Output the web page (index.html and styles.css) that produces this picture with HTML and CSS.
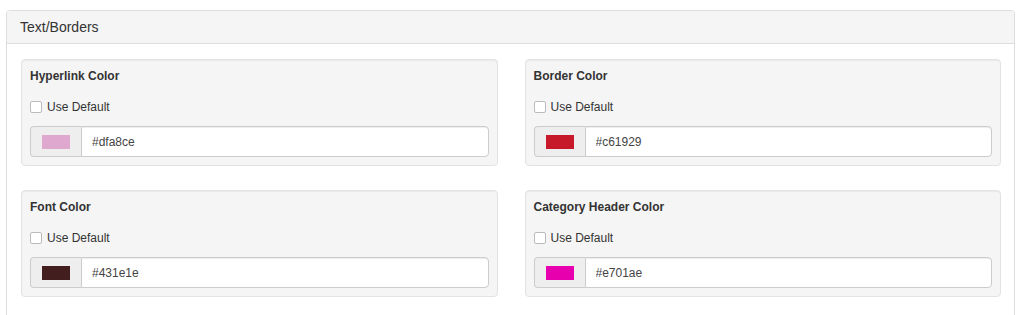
FILE: index.html
```html
<!DOCTYPE html>
<html lang="en">
<head>
  <meta charset="UTF-8">
  <title>Text/Borders</title>
  <link rel="stylesheet" href="styles.css">
</head>
<body>
  <div class="panel">
    <div class="panel-heading">Text/Borders</div>
    <div class="panel-body">
      <div class="color-grid">
        <div class="well">
          <div class="well-title">Hyperlink Color</div>
          <label class="check-row"><input type="checkbox" class="check"> Use Default</label>
          <div class="input-group">
            <span class="addon"><span class="swatch" style="background-color: #dfa8ce;"></span></span>
            <input type="text" class="color-input" value="#dfa8ce">
          </div>
        </div>
        <div class="well">
          <div class="well-title">Border Color</div>
          <label class="check-row"><input type="checkbox" class="check"> Use Default</label>
          <div class="input-group">
            <span class="addon"><span class="swatch" style="background-color: #c61929;"></span></span>
            <input type="text" class="color-input" value="#c61929">
          </div>
        </div>
        <div class="well">
          <div class="well-title">Font Color</div>
          <label class="check-row"><input type="checkbox" class="check"> Use Default</label>
          <div class="input-group">
            <span class="addon"><span class="swatch" style="background-color: #431e1e;"></span></span>
            <input type="text" class="color-input" value="#431e1e">
          </div>
        </div>
        <div class="well">
          <div class="well-title">Category Header Color</div>
          <label class="check-row"><input type="checkbox" class="check"> Use Default</label>
          <div class="input-group">
            <span class="addon"><span class="swatch" style="background-color: #e701ae;"></span></span>
            <input type="text" class="color-input" value="#e701ae">
          </div>
        </div>
      </div>
    </div>
  </div>
</body>
</html>
```

FILE: styles.css
```css
body {
  margin: 0;
  padding: 10px 9px 0 6px;
  font-family: "Liberation Sans", Arial, sans-serif;
  font-size: 12px;
  color: #333;
  background-color: #fff;
}
.panel {
  border: 1px solid #ddd;
  border-radius: 4px;
  background-color: #fff;
}
.panel-heading {
  height: 32px;
  line-height: 32px;
  padding: 0 13px;
  font-size: 14px;
  background-color: #f5f5f5;
  border-bottom: 1px solid #ddd;
  border-radius: 3px 3px 0 0;
}
.panel-body {
  padding: 15px 13px 30px 14px;
}
.color-grid {
  display: grid;
  grid-template-columns: 1fr 1fr;
  column-gap: 27px;
  row-gap: 24px;
}
.well {
  background-color: #f5f5f5;
  border: 1px solid #e3e3e3;
  border-radius: 4px;
  box-shadow: inset 0 1px 1px rgba(0, 0, 0, 0.05);
  padding: 8px;
}
.well-title {
  font-weight: bold;
  line-height: 16px;
  margin-bottom: 15px;
}
.check-row {
  display: flex;
  align-items: center;
  gap: 5px;
  line-height: 16px;
  height: 16px;
  margin-bottom: 11px;
}
.check {
  appearance: none;
  -webkit-appearance: none;
  width: 12px;
  height: 12px;
  margin: 0;
  border: 1px solid #bbb;
  border-radius: 2px;
  background-color: #fff;
}
.input-group {
  display: flex;
  height: 31px;
}
.addon {
  display: flex;
  align-items: center;
  justify-content: center;
  width: 50px;
  background-color: #eee;
  border: 1px solid #ccc;
  border-right: none;
  border-radius: 4px 0 0 4px;
}
.swatch {
  width: 28px;
  height: 14px;
}
.color-input {
  flex: 1;
  min-width: 0;
  margin: 0;
  padding: 0 10px;
  font-family: inherit;
  font-size: 12px;
  color: #444;
  background-color: #fff;
  border: 1px solid #ccc;
  border-radius: 0 4px 4px 0;
  box-shadow: inset 0 1px 1px rgba(0, 0, 0, 0.075);
}
```
